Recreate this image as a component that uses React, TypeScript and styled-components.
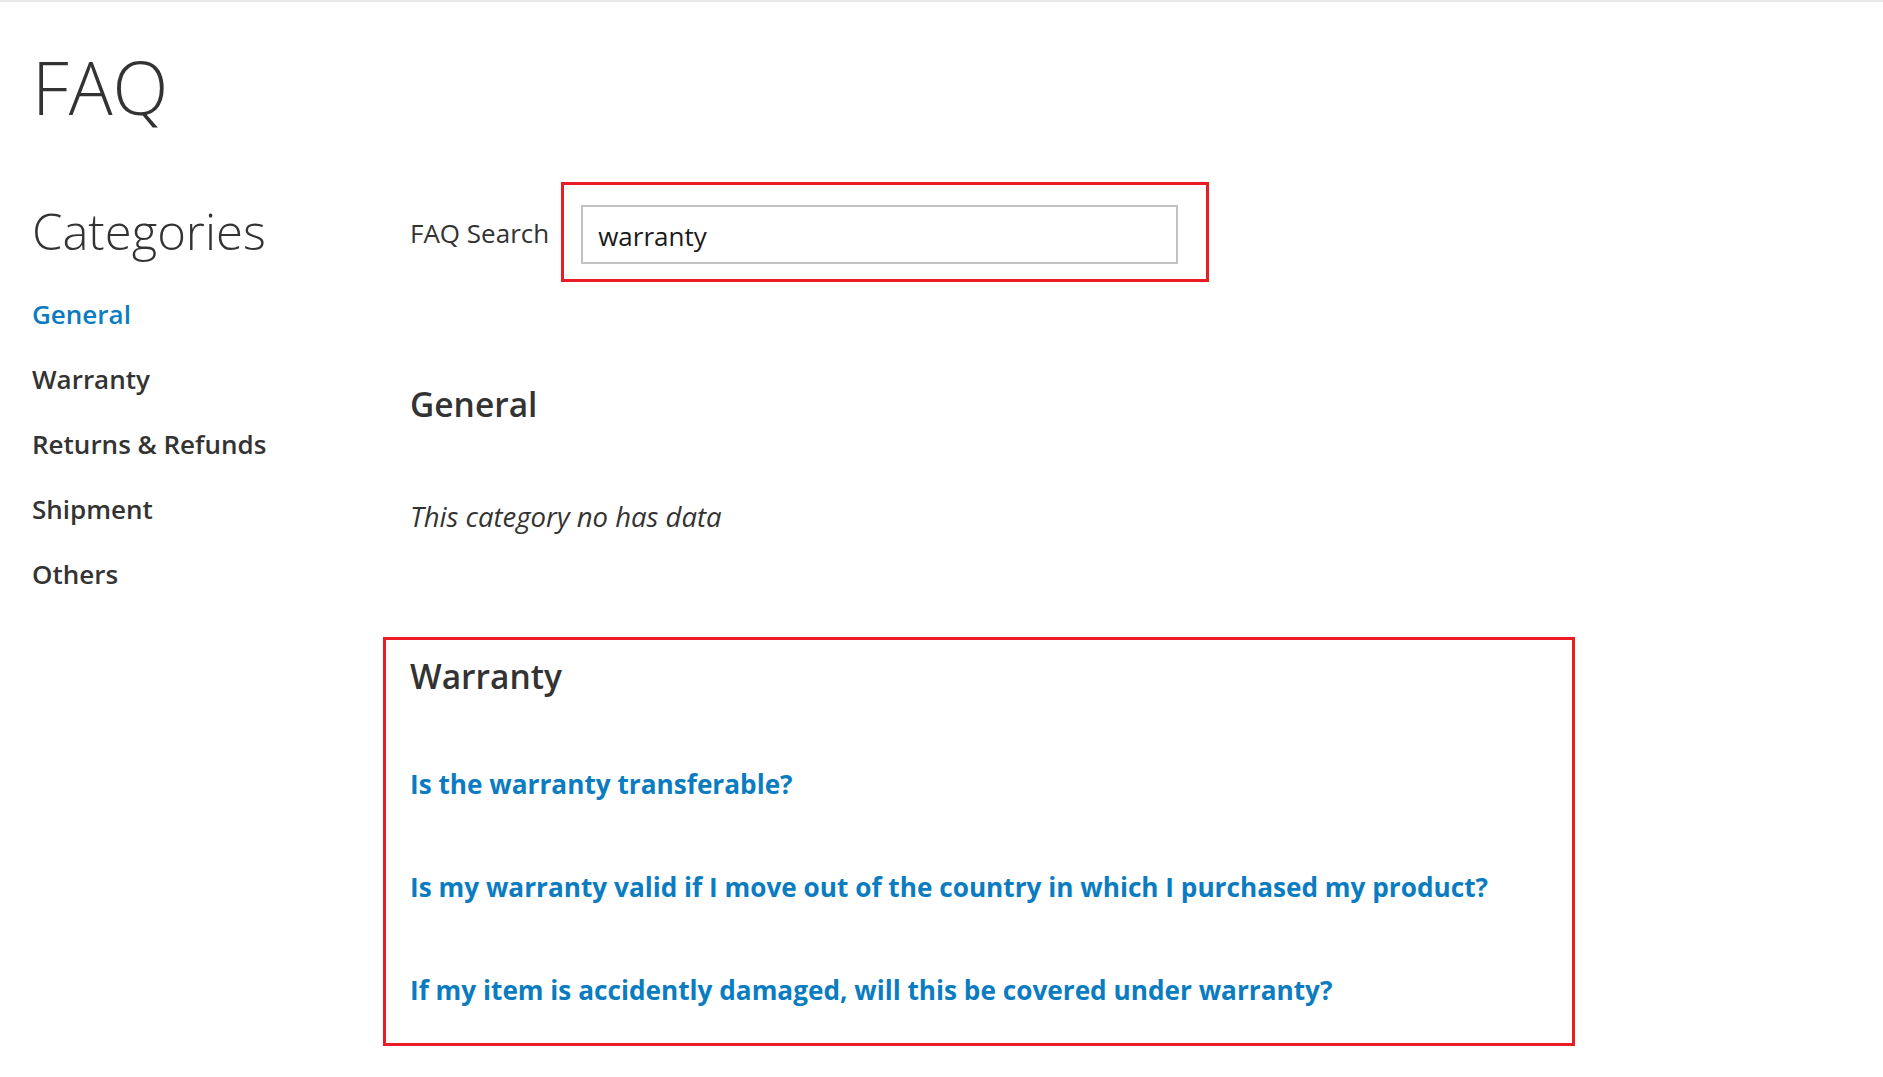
import React from "react";
import styled, { createGlobalStyle } from "styled-components";

const Global = createGlobalStyle`
  html, body { margin: 0; padding: 0; background: #fff; }
  body { font-family: "Open Sans", "Noto Sans", sans-serif; color: #333; }
  * { box-sizing: border-box; }
`;

const Page = styled.div`
  border-top: 2px solid #e8e8e8;
  padding: 0 32px 40px 32px;
  min-height: 1077px;
`;

const Title = styled.h1`
  margin: 43px 0 0 0;
  font-size: 73px;
  line-height: 84px;
  font-weight: 300;
  color: #333;
`;

const Columns = styled.div`
  display: flex;
  margin-top: 53px;
`;

const Sidebar = styled.aside`
  width: 378px;
  flex: none;
  padding-top: 21px;
`;

const SideTitle = styled.h2`
  margin: 0 0 23px 0;
  font-size: 49px;
  line-height: 56px;
  font-weight: 300;
  color: #333;
`;

const NavList = styled.ul`
  list-style: none;
  margin: 0;
  padding: 0;
`;

const NavItem = styled.li<{ $active?: boolean }>`
  font-size: 26px;
  line-height: 65px;
  font-weight: 600;
  color: ${(p) => (p.$active ? "#0a7cbf" : "#333")};
`;

const Main = styled.main`
  flex: 1;
`;

const SearchRow = styled.div`
  display: flex;
  align-items: center;
  gap: 12px;
`;

const SearchLabel = styled.label`
  font-size: 26px;
  font-weight: 400;
  color: #333;
  padding-top: 2px;
`;

const Highlight = styled.div<{ $pad: string }>`
  border: 3px solid #ea1c24;
  padding: ${(p) => p.$pad};
`;

const SearchInput = styled.input`
  width: 597px;
  height: 59px;
  border: 2px solid #c2c2c2;
  padding: 2px 15px 0 15px;
  font-family: "Open Sans", "Noto Sans", sans-serif;
  font-size: 26px;
  color: #1a1a1a;
  outline: none;
`;

const Section = styled.section``;

const SectionTitle = styled.h2<{ $top: number }>`
  margin: ${(p) => p.$top}px 0 0 0;
  font-size: 33.5px;
  line-height: 44px;
  font-weight: 600;
  color: #333;
`;

const Empty = styled.p`
  margin: 71px 0 0 0;
  font-size: 27.5px;
  line-height: 40px;
  font-style: italic;
  color: #333;
`;

const QuestionList = styled.div`
  display: flex;
  flex-direction: column;
  gap: 63px;
  margin-top: 66px;
`;

const Question = styled.a`
  font-size: 26.2px;
  line-height: 40px;
  font-weight: 700;
  color: #0a7cbf;
  text-decoration: none;
`;

const WarrantyFrame = styled(Highlight)`
  margin: 100px 0 0 -27px;
  width: 1192px;
`;

const categories = ["General", "Warranty", "Returns & Refunds", "Shipment", "Others"];
const questions = [
  "Is the warranty transferable?",
  "Is my warranty valid if I move out of the country in which I purchased my product?",
  "If my item is accidently damaged, will this be covered under warranty?",
];

export default function App() {
  return (
    <>
      <Global />
      <Page>
        <Title>FAQ</Title>
        <Columns>
          <Sidebar>
            <SideTitle>Categories</SideTitle>
            <NavList>
              {categories.map((c, i) => (
                <NavItem key={c} $active={i === 0}>
                  {c}
                </NavItem>
              ))}
            </NavList>
          </Sidebar>
          <Main>
            <SearchRow>
              <SearchLabel>FAQ Search</SearchLabel>
              <Highlight $pad="20px 28px 15px 17px">
                <SearchInput defaultValue="warranty" />
              </Highlight>
            </SearchRow>
            <Section>
              <SectionTitle $top={100}>General</SectionTitle>
              <Empty>This category no has data</Empty>
            </Section>
            <WarrantyFrame $pad="14px 24px 33px 24px">
              <SectionTitle $top={0}>Warranty</SectionTitle>
              <QuestionList>
                {questions.map((q) => (
                  <Question key={q} href="#">
                    {q}
                  </Question>
                ))}
              </QuestionList>
            </WarrantyFrame>
          </Main>
        </Columns>
      </Page>
    </>
  );
}
